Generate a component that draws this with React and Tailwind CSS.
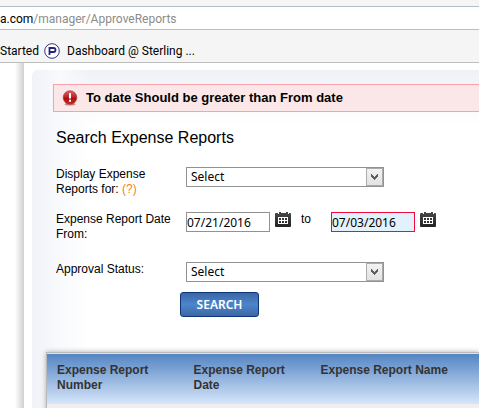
import React, { useState } from "react";

const uiFont = "font-['Noto_Sans','Open_Sans',sans-serif]";

function CalendarIcon() {
  return (
    <svg width="16" height="16" viewBox="0 0 16 16" aria-hidden="true">
      <defs>
        <linearGradient id="calendar" x1="0" y1="0" x2="0" y2="1">
          <stop offset="0" stopColor="#4a4a4a" />
          <stop offset="1" stopColor="#222222" />
        </linearGradient>
      </defs>
      <path d="M1 1h2v1h1V0h2v1h5V0h2v2h1V1h1q1 0 1 1v12q0 1-1 1H1q-1 0-1-1V2q0-1 1-1z" fill="url(#calendar)" />
      <path d="M3 5h10v1H3zM3 8h10v1H3zM3 11h10v1H3zM3 5h1v7H3zM6 5h1v7H6zM9 5h1v7H9zM12 5h1v7h-1z" fill="#ffffff" />
    </svg>
  );
}

function ErrorIcon() {
  return (
    <svg width="16" height="16" viewBox="0 0 16 16" className="shrink-0" aria-hidden="true">
      <defs>
        <linearGradient id="alert" x1="0" y1="0" x2="0" y2="1">
          <stop offset="0" stopColor="#d9646a" />
          <stop offset="0.45" stopColor="#c4232a" />
          <stop offset="0.55" stopColor="#ab0d12" />
          <stop offset="1" stopColor="#cf2522" />
        </linearGradient>
      </defs>
      <ellipse cx="8" cy="14.3" rx="5.5" ry="1.2" fill="#b98c8c" />
      <circle cx="8" cy="7.5" r="6.8" fill="url(#alert)" stroke="#a52a2d" strokeWidth="0.6" />
      <path d="M7 3h2v5.5H7zM7 9.8h2v2H7z" fill="#ffffff" />
    </svg>
  );
}

function SelectBox({ id }) {
  return (
    <div className="relative h-5 w-[198px]">
      <select
        id={id}
        className={`h-5 w-full appearance-none border border-[#929292] bg-white pl-1 text-xs leading-4 text-black outline-none ${uiFont}`}
      >
        <option>Select</option>
      </select>
      <span className="pointer-events-none absolute top-px right-px flex h-[18px] w-[17px] items-center justify-center border border-[#ababab] bg-linear-to-b from-[#f2f2f2] to-[#e3e3e3]">
        <svg width="7" height="6" viewBox="0 0 7 6" aria-hidden="true">
          <path d="M0 0h1v1h1v1h1v1h1V2h1V1h1V0h1v3H6v1H5v1H4v1H3V5H2V4H1V3H0z" fill="#5e5e5e" />
        </svg>
      </span>
    </div>
  );
}

function DateBox({ id, label, initial, invalid }) {
  const [value, setValue] = useState(initial);
  return (
    <div className="flex gap-[5px]">
      <input
        id={id}
        type="text"
        aria-label={label}
        aria-invalid={invalid}
        value={value}
        onChange={(e) => setValue(e.target.value)}
        className={`h-5 w-[84px] border text-xs text-black outline-none ${uiFont} ${
          invalid ? "border-[#f5093c] bg-[#e3f1fc]" : "border-[#929292] bg-white"
        }`}
      />
      <button type="button" aria-label={`Choose ${label}`} className="h-4 w-4">
        <CalendarIcon />
      </button>
    </div>
  );
}

function BrowserBar() {
  return (
    <header className="bg-[#f5f5f5] font-[Roboto,sans-serif] text-xs">
      <div className="pt-1.5">
        <div className="flex h-6 items-center border-y border-[#b3bfc8] bg-white pt-0.5 whitespace-nowrap text-[#8c8c8c]">
          <span className="text-black">a.com</span>/manager/ApproveReports
        </div>
      </div>
      <nav className="flex h-[33px] items-center border-b border-[#bebebe] pt-[9px] text-black">
        <a href="#started" className="w-11 whitespace-nowrap">Started</a>
        <a href="#dashboard" className="flex items-center gap-[7px] whitespace-nowrap">
          <svg width="16" height="16" viewBox="0 0 16 16" aria-hidden="true">
            <circle cx="8" cy="8" r="7.3" fill="#ffffff" stroke="#343384" strokeWidth="1" />
            <path d="M5.5 12V5h4q2 0 2 2t-2 2h-4" fill="none" stroke="#252478" strokeWidth="1.8" />
          </svg>
          Dashboard @ Sterling ...
        </a>
      </nav>
    </header>
  );
}

function Row({ children }) {
  return <div className="grid grid-cols-[130px_1fr] items-start">{children}</div>;
}

export default function App() {
  return (
    <div className="flex h-screen flex-col overflow-hidden bg-white font-['Liberation_Sans',Arial,sans-serif] text-black">
      <BrowserBar />
      <div className="flex flex-1">
        <div className="ml-[15px] w-[9px] shrink-0 bg-linear-to-r from-white to-[#d0d0d0]" />
        <main className="mt-[7px] ml-2 min-w-0 flex-1 rounded-tl-md bg-[linear-gradient(to_right,#f0f2f8,#f9fafc_28px,transparent_60px),linear-gradient(to_bottom,#eff1f7,#ffffff_55px)] pt-3.5">
          <div role="alert" className="ml-[21px] flex h-7 items-center gap-2 border border-r-0 border-[#fa9fac] bg-[#fbe7e7] pl-2 text-[13px] font-bold whitespace-nowrap">
            <ErrorIcon />
            To date Should be greater than From date
          </div>
          <form className="pl-6" onSubmit={(e) => e.preventDefault()}>
            <h1 className="mt-4 text-base leading-5">Search Expense Reports</h1>
            <div className="mt-[19px] flex flex-col gap-[15px] text-xs leading-[15px]">
              <Row>
                <label htmlFor="person">
                  Display Expense<br />
                  Reports for: <span className="text-[#f58220]">(?)</span>
                </label>
                <SelectBox id="person" />
              </Row>
              <Row>
                <label htmlFor="from">
                  Expense Report Date<br />
                  From:
                </label>
                <div className="flex">
                  <DateBox id="from" label="From date" initial="07/21/2016" />
                  <span className="w-10 pl-2.5">to</span>
                  <DateBox id="to" label="To date" initial="07/03/2016" invalid />
                </div>
              </Row>
            </div>
            <div className="mt-5 text-xs leading-[15px]">
              <Row>
                <label htmlFor="status">Approval Status:</label>
                <SelectBox id="status" />
              </Row>
            </div>
            <button
              type="submit"
              className="mt-2.5 ml-[124px] block h-[25px] w-[79px] rounded-[3px] border border-[#0e3478] bg-linear-to-b from-[#3b66a5] via-[#4c85cc] to-[#3e67a3] font-['Noto_Sans',sans-serif] text-xs font-semibold text-white"
            >
              SEARCH
            </button>
          </form>
          <table className="mt-[35px] ml-3.5 w-[calc(100%-14px)] table-fixed border-collapse bg-[#f0eeee] text-left text-xs leading-[15px] text-[#333333] shadow-[0_0_5px_#aaaaaa]">
            <thead>
              <tr className="h-[51px] border-t border-l border-[#b9b9b9] bg-linear-to-b from-[#5585c2] to-[#d6e6fa] align-top">
                <th className="w-[137px] pt-2.5 pr-5 pl-2.5">Expense Report Number</th>
                <th className="w-[127px] pt-2.5 pr-5 pl-2.5">Expense Report Date</th>
                <th className="pt-2.5 pl-2.5">Expense Report Name</th>
              </tr>
            </thead>
            <tbody>
              <tr className="h-10 border-l border-[#b9b9b9]">
                <td colSpan="3" />
              </tr>
            </tbody>
          </table>
        </main>
      </div>
    </div>
  );
}
